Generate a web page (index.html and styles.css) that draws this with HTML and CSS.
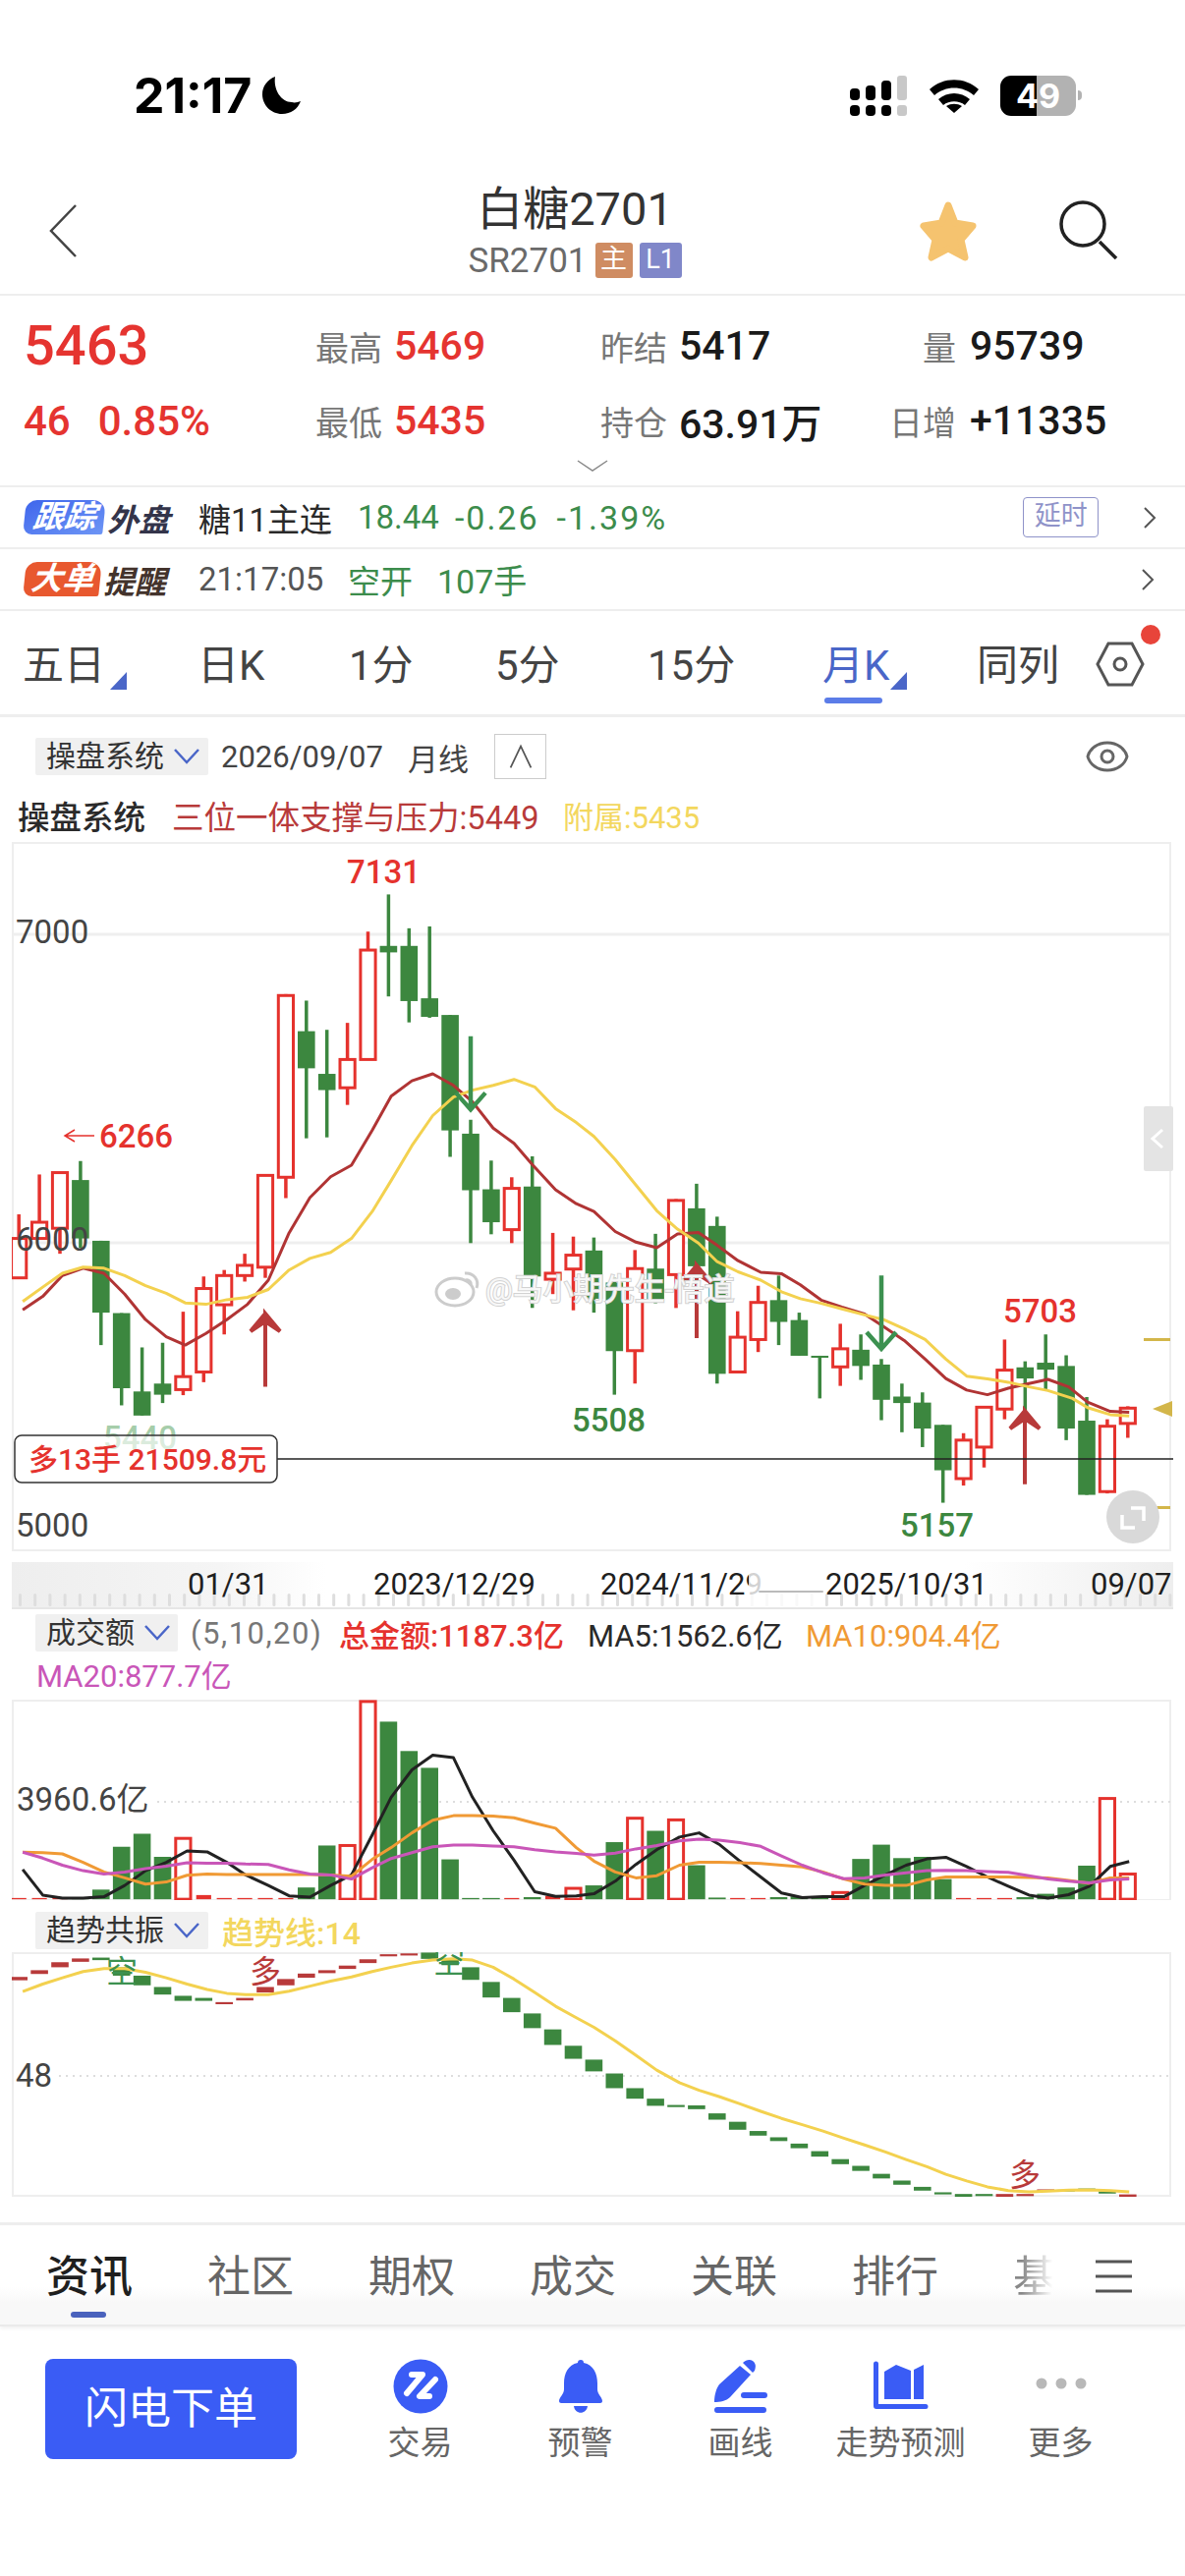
FILE: index.html
```html
<!DOCTYPE html>
<html lang="zh-CN">
<head>
    <meta charset="UTF-8">
    <title>白糖2701</title>
    <link rel="stylesheet" href="styles.css">
</head>
<body>
<div class="status">
    <span class="clock">21:17</span>
    <svg class="moon" viewBox="0 0 43 40"><path d="M15 1C7 4 2 11 2 19c0 11 9 20 20 20 9 0 16-5 19-13-3 1-6 2-9 1C21 27 13 14 15 1z"/></svg>
    <svg class="signal" viewBox="0 0 58 41">
        <rect x="0" y="13" width="10" height="12" rx="4"/>
        <rect x="16" y="10" width="10" height="15" rx="4"/>
        <rect x="32" y="5" width="10" height="20" rx="4"/>
        <rect class="off" x="48" y="0" width="10" height="25" rx="3"/>
        <rect x="0" y="30" width="10" height="11" rx="4"/>
        <rect x="16" y="30" width="10" height="11" rx="4"/>
        <rect x="32" y="30" width="10" height="11" rx="4"/>
        <rect class="off" x="48" y="30" width="10" height="11" rx="3"/>
    </svg>
    <svg class="wifi" viewBox="0 0 52 36">
        <path d="M1 12C15-1 37-1 51 12l-5 6C35 8 17 8 6 18z"/>
        <path d="M10 22c9-8 23-8 32 0l-5 6c-6-5-16-5-22 0z"/>
        <path d="M18 29c5-3 11-3 16 0L26 36z"/>
    </svg>
    <div class="battery"><span>49</span></div>
    <i class="battery-nub"></i>
</div>

<div class="nav">
    <svg class="back" viewBox="0 0 28 54"><path d="M27 1L2 27l25 26"/></svg>
    <div class="nav-title">
        <div class="title">白糖2701</div>
        <div class="subtitle">SR2701<span class="tag tag-main">主</span><span class="tag tag-level">L1</span></div>
    </div>
    <div class="nav-actions">
        <svg class="star" viewBox="0 0 60 62"><path d="M30 5l7 18 18 3-12 14 4 18-17-9-17 9 4-18L5 26l18-3z"/></svg>
        <svg class="search" viewBox="0 0 60 60"><circle cx="24" cy="24" r="22"/><path d="M41 42l17 17"/></svg>
    </div>
</div>

<div class="quote">
    <div class="quote-grid">
        <div class="last-price">5463</div>
        <div class="cell"><label>最高</label><b class="up">5469</b></div>
        <div class="cell"><label>昨结</label><b>5417</b></div>
        <div class="cell wide"><label>量</label><b>95739</b></div>
        <div class="change"><span>46</span><span>0.85%</span></div>
        <div class="cell"><label>最低</label><b class="up">5435</b></div>
        <div class="cell"><label>持仓</label><b>63.91万</b></div>
        <div class="cell wide"><label>日增</label><b>+11335</b></div>
    </div>
    <svg class="quote-more" viewBox="0 0 32 12"><path d="M1 1l15 10L31 1"/></svg>
</div>

<div class="info-row">
    <span class="badge badge-blue">跟踪</span><span class="badge-word word-blue">外盘</span>
    <span class="info-name">糖11主连</span>
    <span class="info-num first">18.44</span><span class="info-num neg">-0.26</span><span class="info-num neg">-1.39%</span>
    <span class="delay">延时</span>
    <svg class="more" viewBox="0 0 14 22"><path d="M2 1l10 10L2 21"/></svg>
</div>
<div class="info-row">
    <span class="badge badge-orange">大单</span><span class="badge-word word-brown">提醒</span>
    <span class="info-time">21:17:05</span>
    <span class="info-num kong">空开</span><span class="info-num hand">107手</span>
    <svg class="more push" viewBox="0 0 14 22"><path d="M2 1l10 10L2 21"/></svg>
</div>

<div class="period-tabs">
    <span class="period has-tri">五日</span>
    <span class="period">日K</span>
    <span class="period">1分</span>
    <span class="period">5分</span>
    <span class="period">15分</span>
    <span class="period active has-tri">月K</span>
    <span class="period">同列</span>
    <span class="period-set">
        <svg viewBox="0 0 50 46"><path d="M13 2h24l11 21-11 21H13L2 23z"/><circle cx="25" cy="23" r="6"/></svg>
        <i class="red-dot"></i>
    </span>
</div>

<div class="subbar">
    <span class="select">操盘系统<svg class="chev" viewBox="0 0 26 16"><path d="M1 1l12 13L25 1"/></svg></span>
    <span class="sub-date">2026/09/07</span>
    <span class="sub-date sub-line">月线</span>
    <span class="collapse"><svg viewBox="0 0 26 30"><path d="M1 28L13 3l12 25"/></svg></span>
    <svg class="eye" viewBox="0 0 44 32"><path d="M2 16C4 8 12 2 22 2s18 6 20 14c-2 8-10 14-20 14S4 24 2 16z"/><circle cx="22" cy="16" r="6"/></svg>
</div>
<div class="legend">
    <span class="legend-name">操盘系统</span>
    <span class="legend-red">三位一体支撑与压力:5449</span>
    <span class="legend-yellow">附属:5435</span>
</div>

<svg id="priceChart" class="chart price-chart" viewBox="12 857 1182 722"></svg>
<svg id="dateAxis" class="chart date-axis" viewBox="12 1590 1182 48"></svg>

<div class="vol-head">
    <span class="select">成交额<svg class="chev" viewBox="0 0 26 16"><path d="M1 1l12 13L25 1"/></svg></span>
    <span class="vol-args">(5,10,20)</span>
    <span class="vol-total">总金额:1187.3亿</span>
    <span class="vol-ma5">MA5:1562.6亿</span>
    <span class="vol-ma10">MA10:904.4亿</span>
</div>
<div class="vol-ma20">MA20:877.7亿</div>
<svg id="volChart" class="chart vol-chart" viewBox="12 1730 1182 204"></svg>

<div class="trend-head">
    <span class="select">趋势共振<svg class="chev" viewBox="0 0 26 16"><path d="M1 1l12 13L25 1"/></svg></span>
    <span class="trend-val">趋势线:14</span>
</div>
<svg id="trendChart" class="chart trend-chart" viewBox="12 1987 1182 249"></svg>

<div class="news-tabs">
    <span class="news active">资讯</span>
    <span class="news">社区</span>
    <span class="news">期权</span>
    <span class="news">成交</span>
    <span class="news">关联</span>
    <span class="news">排行</span>
    <span class="news news-fade">基</span>
    <svg class="menu" viewBox="0 0 37 34"><path d="M0 2h37M0 17h37M0 32h37"/></svg>
</div>

<div class="toolbar">
    <div class="order-btn">闪电下单</div>
    <div class="tool">
        <svg viewBox="0 0 56 56"><circle class="fill" cx="28" cy="28" r="27.5"/><path class="cut" d="M19 16h11L14 35M43 21L27 38h10"/></svg>
        <span>交易</span>
    </div>
    <div class="tool">
        <svg viewBox="0 0 56 56"><path class="fill" d="M25 4a3 3 0 0 1 6 0c10 2 14 11 14 21v6c0 5 5 8 5 12 0 1-1 2-2 2H8c-1 0-2-1-2-2 0-4 5-7 5-12v-6c0-10 4-19 14-21zM21 48h14c-1 9-13 9-14 0z"/></svg>
        <span>预警</span>
    </div>
    <div class="tool">
        <svg viewBox="0 0 56 56"><path class="fill" d="M27 7l11 9-21 23c-4 4-10 5-16 5 0-7 2-14 5-18zM30 4c3-3 7-4 10-2 4 3 3 7 2 10l-2 2zM31 34h21a3 3 0 0 1 0 6H31a3 3 0 0 1 0-6zM4 49h47a3 3 0 0 1 0 6H4a3 3 0 0 1 0-6z"/></svg>
        <span>画线</span>
    </div>
    <div class="tool">
        <svg viewBox="0 0 56 56"><path class="fill" d="M0 5a2 2 0 0 1 5 0v41h48a2.500 2.500 0 0 1 0 5H3a3 3 0 0 1-3-3zM11 13l12-7 15 6v29H11zM41 11l10-5v35H41z"/></svg>
        <span>走势预测</span>
    </div>
    <div class="tool">
        <svg viewBox="0 0 56 56"><circle class="dot" cx="8" cy="25" r="5.500"/><circle class="dot" cx="28" cy="25" r="5.500"/><circle class="dot" cx="48" cy="25" r="5.500"/></svg>
        <span>更多</span>
    </div>
</div>

<script src="chart.js"></script>
</body>
</html>
```

FILE: styles.css
```css
* {
    box-sizing: border-box;
}

body {
    margin: 0;
    width: 1206px;
    height: 2622px;
    overflow: hidden;
    background: #ffffff;
    color: #222222;
    font-family: Roboto, "Noto Sans CJK SC", sans-serif;
}

svg {
    display: block;
    flex: none;
}

/* status bar */
.status {
    display: flex;
    align-items: center;
    height: 150px;
    padding: 44px 0 0 136px;
}

.clock {
    font-family: Inter, sans-serif;
    font-size: 50px;
    font-weight: 700;
    color: #000000;
    line-height: 50px;
    width: 129px;
}

.moon {
    width: 43px;
    height: 40px;
    fill: #000000;
}

.signal {
    width: 58px;
    height: 41px;
    margin-left: 557px;
    fill: #000000;
}

.signal .off {
    fill: #c8c8c8;
}

.wifi {
    width: 52px;
    height: 36px;
    margin-left: 22px;
    fill: #000000;
}

.battery {
    width: 77px;
    height: 41px;
    margin-left: 21px;
    border-radius: 11px;
    background: linear-gradient(to right, #000000 48%, #b2b2b2 48%);
    color: #ffffff;
    font-family: Inter, sans-serif;
    font-size: 34px;
    font-weight: 700;
    line-height: 41px;
    text-align: center;
}

.battery-nub {
    width: 4px;
    height: 10px;
    margin-left: 2px;
    border-radius: 0 4px 4px 0;
    background: #b2b2b2;
}

/* title */
.nav {
    display: grid;
    grid-template-columns: 400px 370px 1fr;
    height: 151px;
    border-bottom: 2px solid #eeeeee;
}

.back {
    width: 28px;
    height: 54px;
    margin: 58px 0 0 50px;
    fill: none;
    stroke: #444444;
    stroke-width: 2.500;
}

.nav-title {
    text-align: center;
}

.title {
    margin-top: 35px;
    font-size: 47px;
    line-height: 56px;
    color: #333333;
}

.subtitle {
    display: flex;
    align-items: center;
    justify-content: center;
    height: 36px;
    margin-top: 6px;
    font-size: 35px;
    color: #6a6a6a;
}

.tag {
    width: 38px;
    height: 36px;
    margin-left: 8px;
    border-radius: 3px;
    color: #ffffff;
    font-size: 27px;
    line-height: 35px;
    text-align: center;
}

.tag-main {
    background: #cf8c62;
}

.tag-level {
    width: 43px;
    margin-left: 7px;
    background: #8087c9;
}

.nav-actions {
    display: flex;
    align-items: flex-start;
    padding: 54px 0 0 164px;
}

.star {
    width: 62px;
    height: 62px;
    fill: #f5c36f;
    stroke: #f5c36f;
    stroke-width: 7;
    stroke-linejoin: round;
}

.search {
    width: 60px;
    height: 60px;
    margin-left: 82px;
    fill: none;
    stroke: #222222;
    stroke-width: 3.500;
}

/* quote */
.quote {
    height: 195px;
    padding: 13px 0 0 24px;
    border-bottom: 2px solid #eeeeee;
}

.quote-grid {
    display: grid;
    grid-template-columns: 297px 290px 294px 1fr;
    grid-auto-rows: 76px;
}

.last-price {
    align-self: center;
    font-size: 56px;
    font-weight: 500;
    line-height: 60px;
    color: #e53430;
}

.change {
    display: flex;
    align-items: center;
    gap: 28px;
    font-size: 42px;
    font-weight: 500;
    color: #e53430;
}

.cell {
    display: flex;
    align-items: center;
    font-size: 41px;
}

.cell label {
    width: 80px;
    font-size: 34px;
    color: #777777;
    white-space: nowrap;
}

.cell b {
    font-weight: 500;
    color: #1a1a1a;
    white-space: nowrap;
}

.cell b.up {
    color: #e53430;
}

.cell.wide label {
    width: 68px;
    margin-right: 14px;
    text-align: right;
}

.quote-more {
    width: 32px;
    height: 12px;
    margin: 2px 0 0 563px;
    fill: none;
    stroke: #888888;
    stroke-width: 1.500;
}

/* info rows */
.info-row {
    display: flex;
    align-items: center;
    height: 63px;
    padding-left: 25px;
    border-bottom: 2px solid #eeeeee;
    font-size: 33px;
}

.badge {
    width: 81px;
    height: 35px;
    border-radius: 11px 13px 2px 9px;
    transform: skewX(-6deg);
    color: #ffffff;
    font-size: 32px;
    font-style: italic;
    font-weight: 700;
    line-height: 34px;
    text-align: center;
}

.badge-blue {
    background: linear-gradient(to bottom right, #3f66ec, #6d95f5);
}

.badge-orange {
    width: 77px;
    background: #e8582f;
}

.badge-word {
    width: 93px;
    margin-left: 3px;
    font-size: 32px;
    font-style: italic;
    font-weight: 700;
}

.word-blue {
    color: #33344a;
}

.word-brown {
    width: 97px;
    color: #43332c;
}

.info-name {
    width: 162px;
    color: #2a2a2a;
}

.info-num {
    margin-right: 19px;
    color: #3c8c4c;
}

.info-num.first {
    margin-right: 16px;
}

.info-num.neg {
    margin-right: 18px;
    font-size: 34px;
    letter-spacing: 2px;
}

.info-time {
    width: 152px;
    color: #555555;
}

.kong {
    margin-right: 25px;
}

.hand {
    font-size: 34px;
}

.delay {
    width: 77px;
    height: 41px;
    margin-left: 344px;
    border: 1.500px solid #8f93c9;
    border-radius: 4px;
    color: #8f93c9;
    font-size: 27px;
    line-height: 36px;
    text-align: center;
}

.more {
    width: 14px;
    height: 22px;
    margin-left: 45px;
    fill: none;
    stroke: #555555;
    stroke-width: 2;
}

.more.push {
    margin-left: auto;
    margin-right: 31px;
}

/* period tabs */
.period-tabs {
    display: grid;
    grid-template-columns: 178px 154px 149px 155px 178px 157px 121px 1fr;
    height: 108px;
    padding: 32px 0 0 23px;
    border-bottom: 3px solid #eeeeee;
    font-size: 42px;
    line-height: 48px;
    color: #444444;
}

.period {
    position: relative;
}

.period.active {
    color: #4a66c8;
}

.period.active::before {
    content: "";
    position: absolute;
    left: 2px;
    top: 56px;
    width: 59px;
    height: 6px;
    border-radius: 3px;
    background: #5b7ce8;
}

.has-tri::after {
    content: "";
    position: absolute;
    left: 89px;
    top: 30px;
    border-style: solid;
    border-width: 0 0 18px 17px;
    border-color: transparent transparent #4a66c8 transparent;
}

.active.has-tri::after {
    left: 69px;
}

.period-set {
    position: relative;
}

.period-set svg {
    width: 50px;
    height: 46px;
    margin-top: -1px;
    fill: none;
    stroke: #555555;
    stroke-width: 3;
}

.red-dot {
    position: absolute;
    left: 46px;
    top: -18px;
    width: 20px;
    height: 20px;
    border-radius: 50%;
    background: #e8443a;
}

/* chart heading */
.subbar {
    display: flex;
    align-items: center;
    height: 80px;
    padding-left: 36px;
    font-size: 31px;
    color: #444444;
}

.select {
    display: flex;
    align-items: center;
    height: 38px;
    padding-left: 11px;
    background: #f0f0f0;
    border-radius: 2px;
    color: #333333;
    font-size: 30px;
    line-height: 38px;
}

.subbar .select {
    width: 176px;
}

.chev {
    width: 26px;
    height: 16px;
    margin-left: 10px;
    fill: none;
    stroke: #4a66c8;
    stroke-width: 2.500;
}

.sub-date {
    margin-left: 13px;
}

.sub-line {
    margin-left: 25px;
}

.collapse {
    width: 53px;
    height: 46px;
    margin-left: 26px;
    padding: 9px 0 0 14px;
    border: 1.500px solid #cccccc;
}

.collapse svg {
    width: 24px;
    height: 26px;
    fill: none;
    stroke: #555555;
    stroke-width: 2;
}

.eye {
    width: 44px;
    height: 32px;
    margin-left: 549px;
    fill: none;
    stroke: #666666;
    stroke-width: 3;
}

.legend {
    display: flex;
    align-items: center;
    height: 46px;
    margin-bottom: 1px;
    padding-left: 18px;
    font-size: 32.500px;
    line-height: 46px;
}

.legend-name {
    width: 157px;
    color: #2a2a2a;
    font-weight: 500;
}

.legend-red {
    width: 398px;
    color: #b83a3a;
}

.legend-yellow {
    color: #f3d75e;
    font-size: 31px;
}

/* charts */
.chart {
    margin-left: 12px;
    width: 1182px;
}

.price-chart {
    height: 722px;
}

.date-axis {
    height: 48px;
    margin-top: 11px;
    background: linear-gradient(to right, #eeeeee 0, #f5f5f5 18%, #ffffff 27%, #ffffff 82%, #eeeeee 100%);
}

.vol-chart {
    height: 204px;
}

.trend-chart {
    height: 249px;
}

.frame {
    fill: none;
    stroke: #eeeeee;
    stroke-width: 2;
}

.grid-line {
    stroke: #efefef;
    stroke-width: 3;
}

.dot-line {
    stroke: #dddddd;
    stroke-width: 2;
    stroke-dasharray: 2 5;
}

.price-line {
    stroke: #222222;
    stroke-width: 1.500;
}

.wick-r, .wick-g {
    stroke-width: 3.500;
}

.wick-r {
    stroke: #e5322d;
}

.wick-g {
    stroke: #3c873f;
}

.body-r {
    fill: #ffffff;
    stroke: #e5322d;
    stroke-width: 3;
}

.body-g {
    fill: #3c873f;
}

.fill-r {
    fill: #e5322d;
}

.fill-d {
    fill: #b83a3a;
}

.ma {
    fill: none;
    stroke-width: 3;
    stroke-linejoin: round;
}

.ma-red {
    stroke: #b03434;
}

.ma-yellow {
    stroke: #f3d14f;
}

.ma-black {
    stroke: #222222;
}

.ma-orange {
    stroke: #f09a35;
}

.ma-pink {
    stroke: #c956b8;
}

.arrow-up {
    fill: #b83a3a;
    stroke: #b83a3a;
    stroke-width: 4;
}

.arrow-down {
    fill: none;
    stroke: #3c9150;
    stroke-width: 4.500;
}

.axis-text {
    font-size: 33px;
    fill: #444444;
}

.peak {
    font-size: 33px;
    font-weight: 500;
}

.peak-r {
    fill: #e5322d;
}

.peak-g {
    fill: #3c873f;
}

.peak-fade {
    fill: #a6cdaa;
}

.pos-tag {
    fill: #ffffff;
    fill-opacity: 0.600;
    stroke: #333333;
    stroke-width: 1.500;
}

.pos-text {
    font-size: 30px;
    font-weight: 500;
    fill: #e5322d;
}

.mark-yellow {
    fill: #d3b64a;
}

.side-handle {
    fill: #e4e4e4;
}

.side-chev {
    fill: none;
    stroke: #ffffff;
    stroke-width: 3;
}

.expand-bg {
    fill: #d9d9d9;
}

.expand-icon {
    fill: none;
    stroke: #ffffff;
    stroke-width: 3.500;
}

.wm-text {
    font-size: 31px;
    fill: #ffffff;
    fill-opacity: 0.850;
    stroke: #d2d2d2;
    stroke-width: 2;
    paint-order: stroke;
}

.wm-logo {
    fill: #ffffff;
    stroke: #cccccc;
    stroke-width: 3;
}

.wm-dark {
    fill: #cccccc;
}

.wm-arc {
    fill: none;
    stroke: #cccccc;
    stroke-width: 3;
}

.tick {
    fill: #dedede;
}

.axis-line {
    stroke: #e6e6e6;
    stroke-width: 2;
}

.smear {
    fill: #bbbbbb;
}

.date-text {
    font-size: 31px;
    fill: #1f1f1f;
}

.date-cover {
    fill: #ffffff;
    opacity: 0.800;
}

.trend-mark {
    font-size: 32px;
}

.mark-g {
    fill: #3c9150;
}

.mark-r {
    fill: #b83a3a;
}

/* volume heading */
.vol-head {
    display: flex;
    align-items: center;
    height: 42px;
    margin-top: 3px;
    padding-left: 36px;
    font-size: 31px;
}

.vol-head .select {
    width: 145px;
}

.vol-args {
    width: 151px;
    margin-left: 13px;
    color: #777777;
    letter-spacing: 1.500px;
}

.vol-total {
    width: 253px;
    color: #e5322d;
    font-weight: 500;
}

.vol-ma5 {
    width: 222px;
    color: #2a2a2a;
}

.vol-ma10 {
    color: #f09a35;
}

.vol-ma20 {
    height: 47px;
    padding-left: 37px;
    font-size: 31px;
    line-height: 47px;
    color: #c956b8;
}

/* trend heading */
.trend-head {
    display: flex;
    align-items: center;
    height: 53px;
    padding: 12px 0 3px 36px;
    font-size: 32px;
}

.trend-head .select {
    width: 176px;
}

.trend-val {
    margin-left: 14px;
    color: #f3d75e;
    font-weight: 500;
}

/* news tabs */
.news-tabs {
    display: grid;
    grid-template-columns: repeat(6, 164px) 84px 1fr;
    height: 106px;
    margin-top: 26px;
    padding: 23px 0 0 47px;
    border-top: 3px solid #eeeeee;
    border-bottom: 2px solid #eaeaea;
    background: linear-gradient(to bottom, #ffffff 62%, #f8f8f8 78%);
    box-shadow: 0 2px 4px #f0f0f0;
    font-size: 44px;
    line-height: 60px;
    color: #666666;
}

.news {
    position: relative;
}

.news.active {
    color: #1f1f1f;
    font-weight: 500;
}

.news.active::after {
    content: "";
    position: absolute;
    left: 25px;
    top: 65px;
    width: 36px;
    height: 6px;
    border-radius: 3px;
    background: #4a62bd;
}

.news-fade {
    width: 44px;
    background: linear-gradient(to right, #888888 20%, #ffffff 92%);
    -webkit-background-clip: text;
    background-clip: text;
    color: transparent;
}

.menu {
    width: 37px;
    height: 34px;
    margin-top: 12px;
    fill: none;
    stroke: #555555;
    stroke-width: 3;
}

/* bottom toolbar */
.toolbar {
    display: flex;
    margin-top: 33px;
    padding-left: 46px;
}

.order-btn {
    width: 256px;
    height: 102px;
    margin-right: 44px;
    border-radius: 8px;
    background: #3a5cf5;
    color: #ffffff;
    font-size: 44px;
    line-height: 102px;
    text-align: center;
}

.tool {
    display: flex;
    flex-direction: column;
    align-items: center;
    width: 163px;
    font-size: 33px;
    color: #666666;
}

.tool svg {
    width: 56px;
    height: 56px;
}

.tool span {
    margin-top: 8px;
    line-height: 44px;
    white-space: nowrap;
}

.fill {
    fill: #3a5cf5;
}

.cut {
    fill: none;
    stroke: #ffffff;
    stroke-width: 6;
    stroke-linecap: round;
    stroke-linejoin: round;
}

.dot {
    fill: #b8b8b8;
}
```

FILE: chart.js
```js
// y values below were read off the chart in its own scale, see priceY / volY
var SVG_NS = 'http://www.w3.org/2000/svg';

function add(svg, name, attrs, text) {
    var node = document.createElementNS(SVG_NS, name);
    for (var key in attrs) {
        node.setAttribute(key, attrs[key]);
    }
    if (text) {
        node.textContent = text;
    }
    svg.appendChild(node);
    return node;
}

function slotX(i) {
    return 19.2 + 20.9 * i;
}

function priceY(v) {
    return 850 + v / 2.119;
}

function volY(v) {
    return 1590 + v / 2.34;
}

function leftX(v) {
    return v / 2.6;
}

function rightX(v) {
    return 603 + v / 2.6;
}

function line(svg, cls, left, right, toY) {
    var pts = [];
    left.forEach(function (p) {
        pts.push(leftX(p[0]).toFixed(1) + ',' + toY(p[1]).toFixed(1));
    });
    right.forEach(function (p) {
        pts.push(rightX(p[0]).toFixed(1) + ',' + toY(p[1]).toFixed(1));
    });
    add(svg, 'polyline', {'class': 'ma ' + cls, points: pts.join(' ')});
}

function text(svg, cls, x, y, str) {
    add(svg, 'text', {'class': cls, x: x, y: y}, str);
}

// body top, body bottom, wick top, wick bottom, colour
var candles = [
    [870, 955, 818, 955, 'r'], [835, 870, 732, 870, 'r'], [728, 848, 728, 903, 'r'], [744, 870, 703, 890, 'g'],
    [875, 1030, 875, 1100, 'g'], [1031, 1193, 1031, 1230, 'g'], [1200, 1252, 1105, 1252, 'g'], [1183, 1207, 1095, 1225, 'g'],
    [1168, 1196, 1028, 1208, 'r'], [978, 1158, 952, 1180, 'r'], [950, 1013, 938, 1077, 'r'], [928, 950, 903, 963, 'r'],
    [734, 932, 732, 955, 'r'], [346, 738, 343, 783, 'r'], [423, 503, 357, 654, 'g'], [515, 550, 420, 652, 'g'],
    [484, 545, 405, 582, 'r'], [248, 484, 208, 484, 'r'], [239, 253, 128, 348, 'g'], [239, 358, 201, 404, 'g'],
    [352, 392, 197, 394, 'g'], [388, 637, 388, 694, 'g'], [644, 766, 614, 880, 'g'], [764, 835, 702, 861, 'g'],
    [762, 851, 738, 880, 'r'], [758, 952, 693, 1020, 'g'], [945, 958, 858, 990, 'r'], [906, 936, 866, 1025, 'r'],
    [896, 1000, 868, 1030, 'g'], [965, 1113, 955, 1207, 'g'], [935, 1112, 895, 1183, 'r'], [935, 1005, 860, 1010, 'g'],
    [788, 948, 785, 1020, 'r'], [805, 930, 752, 1000, 'g'], [843, 1162, 823, 1183, 'g'], [1083, 1158, 1027, 1158, 'r'],
    [1008, 1088, 972, 1115, 'r'], [1003, 1050, 950, 1100, 'g'], [1046, 1123, 1030, 1123, 'g'], [1123, 1127, 1123, 1215, 'g'],
    [1108, 1147, 1054, 1188, 'r'], [1110, 1145, 1077, 1175, 'g'], [1142, 1218, 1130, 1262, 'g'], [1211, 1225, 1183, 1288, 'g'],
    [1224, 1280, 1202, 1320, 'g'], [1272, 1370, 1272, 1440, 'g'], [1305, 1388, 1290, 1403, 'r'], [1234, 1320, 1234, 1364, 'r'],
    [1154, 1238, 1088, 1260, 'r'], [1148, 1172, 1135, 1245, 'g'], [1138, 1153, 1077, 1195, 'g'], [1145, 1280, 1122, 1305, 'g'],
    [1263, 1423, 1212, 1423, 'g'], [1275, 1416, 1260, 1420, 'r'], [1236, 1269, 1232, 1300, 'r']
];

var priceRedL = [[60, 1024], [113, 995], [165, 950], [220, 934], [275, 945], [330, 990], [385, 1045], [440, 1082], [490, 1100], [545, 1075], [600, 1045], [655, 1012], [710, 960], [765, 858], [820, 782], [875, 737], [930, 712], [985, 637], [1035, 563], [1090, 530], [1145, 515], [1200, 540], [1250, 575], [1305, 632], [1360, 665], [1410, 712], [1470, 765], [1525, 795]];
var priceRedR = [[4, 812], [60, 855], [115, 878], [170, 890], [225, 860], [280, 857], [330, 885], [385, 918], [445, 943], [500, 946], [550, 970], [605, 1003], [660, 1018], [720, 1033], [770, 1060], [825, 1090], [880, 1130], [935, 1172], [990, 1197], [1045, 1207], [1100, 1193], [1155, 1183], [1205, 1174], [1260, 1190], [1310, 1223], [1370, 1243], [1420, 1245]];
var priceYelL = [[60, 1006], [113, 975], [165, 945], [220, 932], [275, 934], [330, 950], [385, 972], [440, 988], [490, 1009], [545, 1012], [600, 1002], [655, 997], [710, 980], [765, 938], [820, 913], [875, 900], [930, 870], [985, 812], [1035, 745], [1090, 670], [1145, 605], [1200, 565], [1250, 550], [1305, 540], [1360, 527], [1415, 543], [1470, 590], [1525, 620]];
var priceYelR = [[4, 650], [60, 700], [115, 755], [170, 810], [225, 850], [280, 880], [330, 920], [385, 942], [445, 960], [500, 985], [550, 1000], [605, 1010], [660, 1022], [720, 1035], [770, 1045], [825, 1065], [880, 1088], [935, 1130], [990, 1167], [1045, 1173], [1100, 1180], [1155, 1190], [1205, 1198], [1270, 1215], [1310, 1235], [1370, 1250], [1420, 1253]];

// red arrows have a solid head, green ones an open chevron
function arrowUp(svg, x, from, to) {
    var y1 = priceY(from);
    var y2 = priceY(to);
    add(svg, 'path', {
        'class': 'arrow-up',
        d: 'M' + x + ' ' + y1 + 'V' + y2 + 'L' + (x + 15) + ' ' + (y2 + 18) + 'L' + x + ' ' + (y2 + 8) + 'L' + (x - 15) + ' ' + (y2 + 18) + 'L' + x + ' ' + y2
    });
}

function arrowDown(svg, x, from, to) {
    var y1 = priceY(from);
    var y2 = priceY(to);
    add(svg, 'path', {
        'class': 'arrow-down',
        d: 'M' + x + ' ' + y1 + 'V' + y2 + 'M' + (x - 15) + ' ' + (y2 - 17) + 'L' + x + ' ' + y2 + 'L' + (x + 15) + ' ' + (y2 - 17)
    });
}

function drawPrice() {
    var svg = document.getElementById('priceChart');
    add(svg, 'rect', {'class': 'frame', x: 13, y: 858, width: 1178, height: 720});
    add(svg, 'line', {'class': 'grid-line', x1: 13, x2: 1191, y1: 951, y2: 951});
    add(svg, 'line', {'class': 'grid-line', x1: 13, x2: 1191, y1: 1265, y2: 1265});

    candles.forEach(function (c, i) {
        var x = slotX(i);
        add(svg, 'line', {'class': 'wick-' + c[4], x1: x, x2: x, y1: priceY(c[2]), y2: priceY(c[3])});
        var top = priceY(c[0]);
        var h = Math.max(priceY(c[1]) - top, 2);
        if (c[4] === 'r') {
            add(svg, 'rect', {'class': 'body-r', x: x - 7.6, y: top, width: 15.2, height: h});
        } else {
            add(svg, 'rect', {'class': 'body-g', x: x - 8.800, y: top, width: 17.6, height: h});
        }
    });

    line(svg, 'ma-red', priceRedL, priceRedR, priceY);
    line(svg, 'ma-yellow', priceYelL, priceYelR, priceY);

    arrowUp(svg, 270, 1190, 1032);
    arrowDown(svg, 479, 434, 592);
    arrowUp(svg, 709, 1085, 928);
    arrowDown(svg, 897, 950, 1108);
    arrowUp(svg, 1043, 1400, 1242);

    text(svg, 'axis-text', 16, 960, '7000');
    text(svg, 'axis-text', 16, 1273, '6000');
    text(svg, 'axis-text', 16, 1564, '5000');

    text(svg, 'peak peak-r', 353, 899, '7131');
    add(svg, 'path', {d: 'M96 1156H66M76 1150L66 1156L76 1162', fill: 'none', stroke: '#e5322d', 'stroke-width': 1.5});
    text(svg, 'peak peak-r', 101, 1168, '6266');
    text(svg, 'peak peak-fade', 105, 1475, '5440');
    text(svg, 'peak peak-g', 582, 1457, '5508');
    text(svg, 'peak peak-g', 916, 1564, '5157');
    text(svg, 'peak peak-r', 1021, 1346, '5703');

    add(svg, 'line', {'class': 'price-line', x1: 282, x2: 1194, y1: 1485, y2: 1485});
    add(svg, 'rect', {'class': 'pos-tag', x: 15, y: 1461, width: 267, height: 48, rx: 7});
    text(svg, 'pos-text', 29, 1496, '多13手 21509.8元');

    add(svg, 'rect', {'class': 'mark-yellow', x: 1164, y: 1362, width: 27, height: 3});
    add(svg, 'rect', {'class': 'mark-yellow', x: 1164, y: 1533, width: 27, height: 3});
    add(svg, 'path', {'class': 'mark-yellow', d: 'M1173 1434L1193 1426V1442Z'});

    add(svg, 'rect', {'class': 'side-handle', x: 1164, y: 1126, width: 30, height: 66, rx: 2});
    add(svg, 'path', {'class': 'side-chev', d: 'M1183 1150L1173 1159L1183 1168'});

    add(svg, 'circle', {'class': 'expand-bg', cx: 1153, cy: 1544, r: 27});
    add(svg, 'path', {'class': 'expand-icon', d: 'M1142 1542V1555H1155M1151 1535H1164V1548'});

    // watermark sits over the candles
    add(svg, 'ellipse', {'class': 'wm-logo', cx: 463, cy: 1315, rx: 19, ry: 14});
    add(svg, 'ellipse', {'class': 'wm-dark', cx: 461, cy: 1317, rx: 8, ry: 6});
    add(svg, 'path', {'class': 'wm-arc', d: 'M473 1296C482 1295 488 1303 485 1311M474 1303C477 1302 480 1305 479 1308'});
    text(svg, 'wm-text', 494, 1323, '@马小期先生-悟道');
}

function drawAxis() {
    var svg = document.getElementById('dateAxis');
    for (var x = 19; x < 1192; x += 15.2) {
        add(svg, 'rect', {'class': 'tick', x: x, y: 1622, width: 3, height: 13, rx: 1.5});
    }
    add(svg, 'line', {'class': 'axis-line', x1: 12, x2: 1194, y1: 1637, y2: 1637});
    text(svg, 'date-text', 191, 1623, '01/31');
    text(svg, 'date-text', 380, 1623, '2023/12/29');
    text(svg, 'date-text', 611, 1623, '2024/11/29');
    add(svg, 'rect', {'class': 'date-cover', x: 762, y: 1590, width: 78, height: 46});
    add(svg, 'rect', {'class': 'smear', x: 772, y: 1619, width: 66, height: 2, rx: 1});
    text(svg, 'date-text', 840, 1623, '2025/10/31');
    text(svg, 'date-text', 1110, 1623, '09/07');
}

// top of bar, kind: g filled, r hollow, f red filled, small ones lie on the base line
var volumes = [
    [800, 'f'], [800, 'f'], [800, 'f'], [798, 'g'], [780, 'g'], [678, 'g'], [647, 'g'], [702, 'g'], [658, 'r'], [793, 'f'],
    [800, 'f'], [800, 'f'], [800, 'f'], [800, 'f'], [775, 'g'], [675, 'g'], [675, 'r'], [332, 'r'], [380, 'g'], [450, 'g'],
    [490, 'g'], [708, 'g'], [800, 'g'], [800, 'g'], [800, 'f'], [798, 'g'], [795, 'f'], [777, 'r'], [770, 'g'], [667, 'g'],
    [610, 'r'], [640, 'g'], [614, 'r'], [722, 'g'], [799, 'g'], [800, 'f'], [800, 'f'], [798, 'g'], [796, 'g'], [796, 'g'],
    [787, 'r'], [707, 'g'], [673, 'g'], [705, 'g'], [702, 'g'], [755, 'g'], [800, 'f'], [800, 'f'], [800, 'f'], [798, 'g'],
    [790, 'g'], [775, 'g'], [723, 'g'], [563, 'r'], [743, 'r']
];

function drawVolume() {
    var svg = document.getElementById('volChart');
    var base = volY(803);
    add(svg, 'rect', {'class': 'frame', x: 13, y: 1731, width: 1178, height: 203});
    add(svg, 'line', {'class': 'dot-line', x1: 160, x2: 1191, y1: 1834, y2: 1834});

    volumes.forEach(function (v, i) {
        var x = slotX(i);
        var top = volY(v[0]);
        if (v[1] === 'r') {
            add(svg, 'rect', {'class': 'body-r', x: x - 7.6, y: top, width: 15.2, height: base - top});
        } else if (v[1] === 'f') {
            add(svg, 'rect', {'class': 'fill-r', x: x - 7.6, y: top, width: 15.2, height: base - top});
        } else {
            add(svg, 'rect', {'class': 'body-g', x: x - 8.800, y: top, width: 17.6, height: base - top});
        }
    });

    line(svg, 'ma-black',
        [[60, 732], [113, 793], [165, 800], [220, 800], [275, 797], [330, 770], [385, 735], [440, 715], [495, 688], [548, 690], [600, 715], [650, 745], [710, 770], [765, 795], [820, 798], [875, 770], [930, 745], [985, 650], [1035, 560], [1090, 495], [1145, 460], [1200, 466], [1250, 560], [1305, 640], [1360, 710], [1415, 785], [1470, 796], [1525, 795]],
        [[4, 790], [60, 760], [115, 720], [170, 685], [230, 655], [282, 645], [335, 672], [390, 712], [445, 750], [500, 788], [555, 799], [610, 797], [665, 797], [720, 770], [775, 745], [830, 722], [885, 707], [935, 703], [990, 725], [1045, 750], [1100, 772], [1155, 793], [1205, 800], [1260, 792], [1315, 772], [1370, 725], [1420, 713]],
        volY);
    line(svg, 'ma-orange',
        [[60, 691], [113, 692], [165, 695], [220, 715], [275, 738], [330, 752], [385, 767], [440, 762], [495, 746], [548, 743], [600, 744], [650, 744], [710, 744], [765, 744], [820, 744], [875, 745], [930, 748], [985, 708], [1035, 680], [1090, 645], [1145, 615], [1200, 604], [1250, 604], [1305, 605], [1360, 609], [1415, 622], [1470, 634], [1525, 680]],
        [[4, 712], [60, 738], [115, 752], [170, 747], [230, 722], [282, 715], [335, 715], [390, 716], [445, 718], [500, 722], [555, 726], [610, 738], [665, 755], [720, 767], [775, 770], [830, 770], [885, 757], [935, 750], [990, 750], [1045, 750], [1100, 750], [1155, 751], [1205, 752], [1260, 758], [1315, 765], [1370, 752], [1420, 752]],
        volY);
    line(svg, 'ma-pink',
        [[60, 691], [113, 705], [165, 722], [220, 735], [275, 743], [330, 738], [385, 730], [440, 724], [495, 716], [548, 717], [600, 717], [650, 719], [710, 720], [765, 733], [820, 743], [875, 745], [930, 755], [985, 728], [1035, 706], [1090, 692], [1145, 678], [1200, 674], [1250, 674], [1305, 676], [1360, 678], [1415, 685], [1470, 690], [1525, 694]],
        [[4, 698], [60, 693], [115, 683], [170, 675], [230, 664], [282, 660], [335, 662], [390, 668], [445, 677], [500, 700], [555, 722], [610, 740], [665, 754], [720, 752], [775, 745], [830, 740], [885, 735], [935, 734], [990, 735], [1045, 737], [1100, 739], [1155, 747], [1205, 755], [1260, 760], [1315, 764], [1370, 757], [1420, 755]],
        volY);

    text(svg, 'axis-text', 17, 1843, '3960.6亿');
}

// block top, block bottom, g green / d dark red
var trend = [
    [988, 996, 'd'], [972, 981, 'd'], [953, 965, 'd'], [944, 952, 'd'], [942, 948, 'g'], [965, 985, 'g'], [985, 1008, 'g'],
    [1012, 1030, 'g'], [1033, 1045, 'g'], [1038, 1045, 'g'], [1048, 1053, 'd'], [1038, 1044, 'd'], [1012, 1025, 'd'], [993, 1008, 'd'],
    [980, 990, 'd'], [972, 979, 'd'], [961, 969, 'd'], [946, 955, 'd'], [934, 939, 'd'], [932, 937, 'd'], [930, 945, 'g'],
    [945, 960, 'g'], [965, 995, 'g'], [1000, 1037, 'g'], [1038, 1072, 'g'], [1075, 1110, 'g'], [1113, 1150, 'g'], [1152, 1183, 'g'],
    [1185, 1213, 'g'], [1218, 1253, 'g'], [1253, 1278, 'g'], [1278, 1295, 'g'], [1293, 1298, 'g'], [1294, 1303, 'g'], [1313, 1328, 'g'],
    [1333, 1352, 'g'], [1355, 1366, 'g'], [1370, 1379, 'g'], [1385, 1396, 'g'], [1403, 1416, 'g'], [1422, 1434, 'g'], [1438, 1450, 'g'],
    [1457, 1468, 'g'], [1473, 1483, 'g'], [1488, 1497, 'g'], [1501, 1506, 'g'], [1505, 1512, 'g'], [1505, 1510, 'g'], [1505, 1512, 'd'],
    [1505, 1510, 'd'], [1494, 1499, 'd'], [1495, 1499, 'g'], [1492, 1497, 'g'], [1499, 1504, 'g'], [1506, 1512, 'd']
];

function drawTrend() {
    var svg = document.getElementById('trendChart');
    add(svg, 'rect', {'class': 'frame', x: 13, y: 1988, width: 1178, height: 247});
    add(svg, 'line', {'class': 'dot-line', x1: 60, x2: 1191, y1: 2113, y2: 2113});

    trend.forEach(function (b, i) {
        var x = slotX(i);
        var top = volY(b[0]);
        add(svg, 'rect', {'class': b[2] === 'g' ? 'body-g' : 'fill-d', x: x - 8.800, y: top, width: 17.6, height: volY(b[1]) - top});
    });

    line(svg, 'ma-yellow',
        [[60, 1023], [113, 1005], [165, 990], [220, 975], [275, 968], [330, 968], [385, 977], [440, 990], [495, 1005], [548, 1018], [600, 1027], [650, 1030], [710, 1030], [765, 1022], [820, 1010], [875, 998], [930, 988], [985, 975], [1035, 965], [1090, 955], [1145, 948], [1200, 945], [1250, 948], [1305, 965], [1360, 993], [1415, 1025], [1470, 1058], [1525, 1085]],
        [[4, 1108], [60, 1140], [115, 1175], [170, 1210], [230, 1240], [282, 1258], [335, 1273], [390, 1290], [445, 1308], [500, 1325], [555, 1340], [610, 1355], [665, 1372], [720, 1388], [775, 1405], [830, 1423], [885, 1440], [935, 1458], [990, 1474], [1045, 1488], [1100, 1497], [1155, 1500], [1205, 1498], [1260, 1496], [1315, 1495], [1370, 1497], [1420, 1500]],
        volY);

    text(svg, 'trend-mark mark-g', 108, 2018, '空');
    text(svg, 'trend-mark mark-g', 441, 2008, '空');
    text(svg, 'trend-mark mark-r', 254, 2018, '多');
    text(svg, 'trend-mark mark-r', 1027, 2225, '多');
    text(svg, 'axis-text', 16, 2124, '48');
}

drawPrice();
drawAxis();
drawVolume();
drawTrend();
```
